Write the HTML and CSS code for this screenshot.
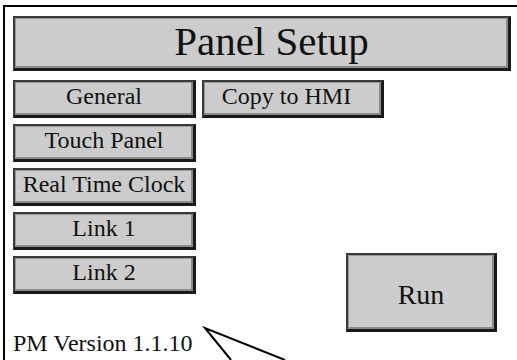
FILE: index.html
```html
<!DOCTYPE html>
<html>
<head>
<meta charset="utf-8">
<link rel="stylesheet" href="styles.css">
</head>
<body>
<div class="frame">
  <div class="title">Panel Setup</div>
  <div class="row-top">
    <div class="btn btn-wide">General</div>
    <div class="btn btn-copy">Copy to HMI</div>
  </div>
  <div class="lower">
    <div class="col">
      <div class="btn btn-wide">Touch Panel</div>
      <div class="btn btn-wide">Real Time Clock</div>
      <div class="btn btn-wide">Link 1</div>
      <div class="btn btn-wide">Link 2</div>
      <div class="version">PM Version 1.1.10</div>
    </div>
    <div class="run-area">
      <div class="btn btn-run">Run</div>
    </div>
  </div>
  <svg class="callout" width="120" height="40" viewBox="0 0 120 40">
    <polyline points="30,40 4,8 84,40" fill="none" stroke="#000" stroke-width="2"/>
  </svg>
</div>
</body>
</html>
```

FILE: styles.css
```css
html, body {
  margin: 0;
  padding: 0;
  background: #fff;
  width: 517px;
  height: 360px;
  overflow: hidden;
}

.frame {
  position: relative;
  margin: 5px 0 0 3px;
  height: 355px;
  border-top: 2px solid #000;
  border-left: 2px solid #000;
  padding: 9px 6px 0 8px;
  box-sizing: border-box;
  font-family: "Liberation Serif", "Times New Roman", serif;
  color: #111;
}

.btn, .title {
  background: #cccccc;
  border-style: solid;
  border-color: #3a3a3a #1a1a1a #1a1a1a #3a3a3a;
  border-width: 2px 3px 3px 2px;
  box-shadow: inset -2px -2px 0 #8a8a8a, inset 1px 1px 0 #999;
  box-sizing: border-box;
  display: flex;
  align-items: center;
  justify-content: center;
  white-space: nowrap;
}

.title {
  height: 55px;
  font-size: 41px;
  padding-bottom: 4px;
  padding-left: 20px;
}

.row-top {
  display: flex;
  gap: 6px;
  margin-top: 9px;
}

.btn {
  height: 38px;
  font-size: 24px;
  padding-bottom: 4px;
}

.btn-wide {
  width: 183px;
}

.btn-copy {
  width: 182px;
  padding-right: 12px;
}

.lower {
  display: flex;
  margin-top: 6px;
}

.col {
  display: flex;
  flex-direction: column;
  gap: 6px;
  width: 183px;
}

.version {
  font-size: 24px;
  line-height: 28px;
  margin-top: 29px;
  white-space: nowrap;
}

.run-area {
  flex: 1;
  display: flex;
  justify-content: flex-end;
  padding-top: 129px;
  padding-right: 14px;
}

.btn-run {
  width: 151px;
  height: 79px;
  font-size: 28px;
  padding-bottom: 0;
  padding-top: 6px;
}

.callout {
  position: absolute;
  left: 196px;
  top: 313px;
}
```
